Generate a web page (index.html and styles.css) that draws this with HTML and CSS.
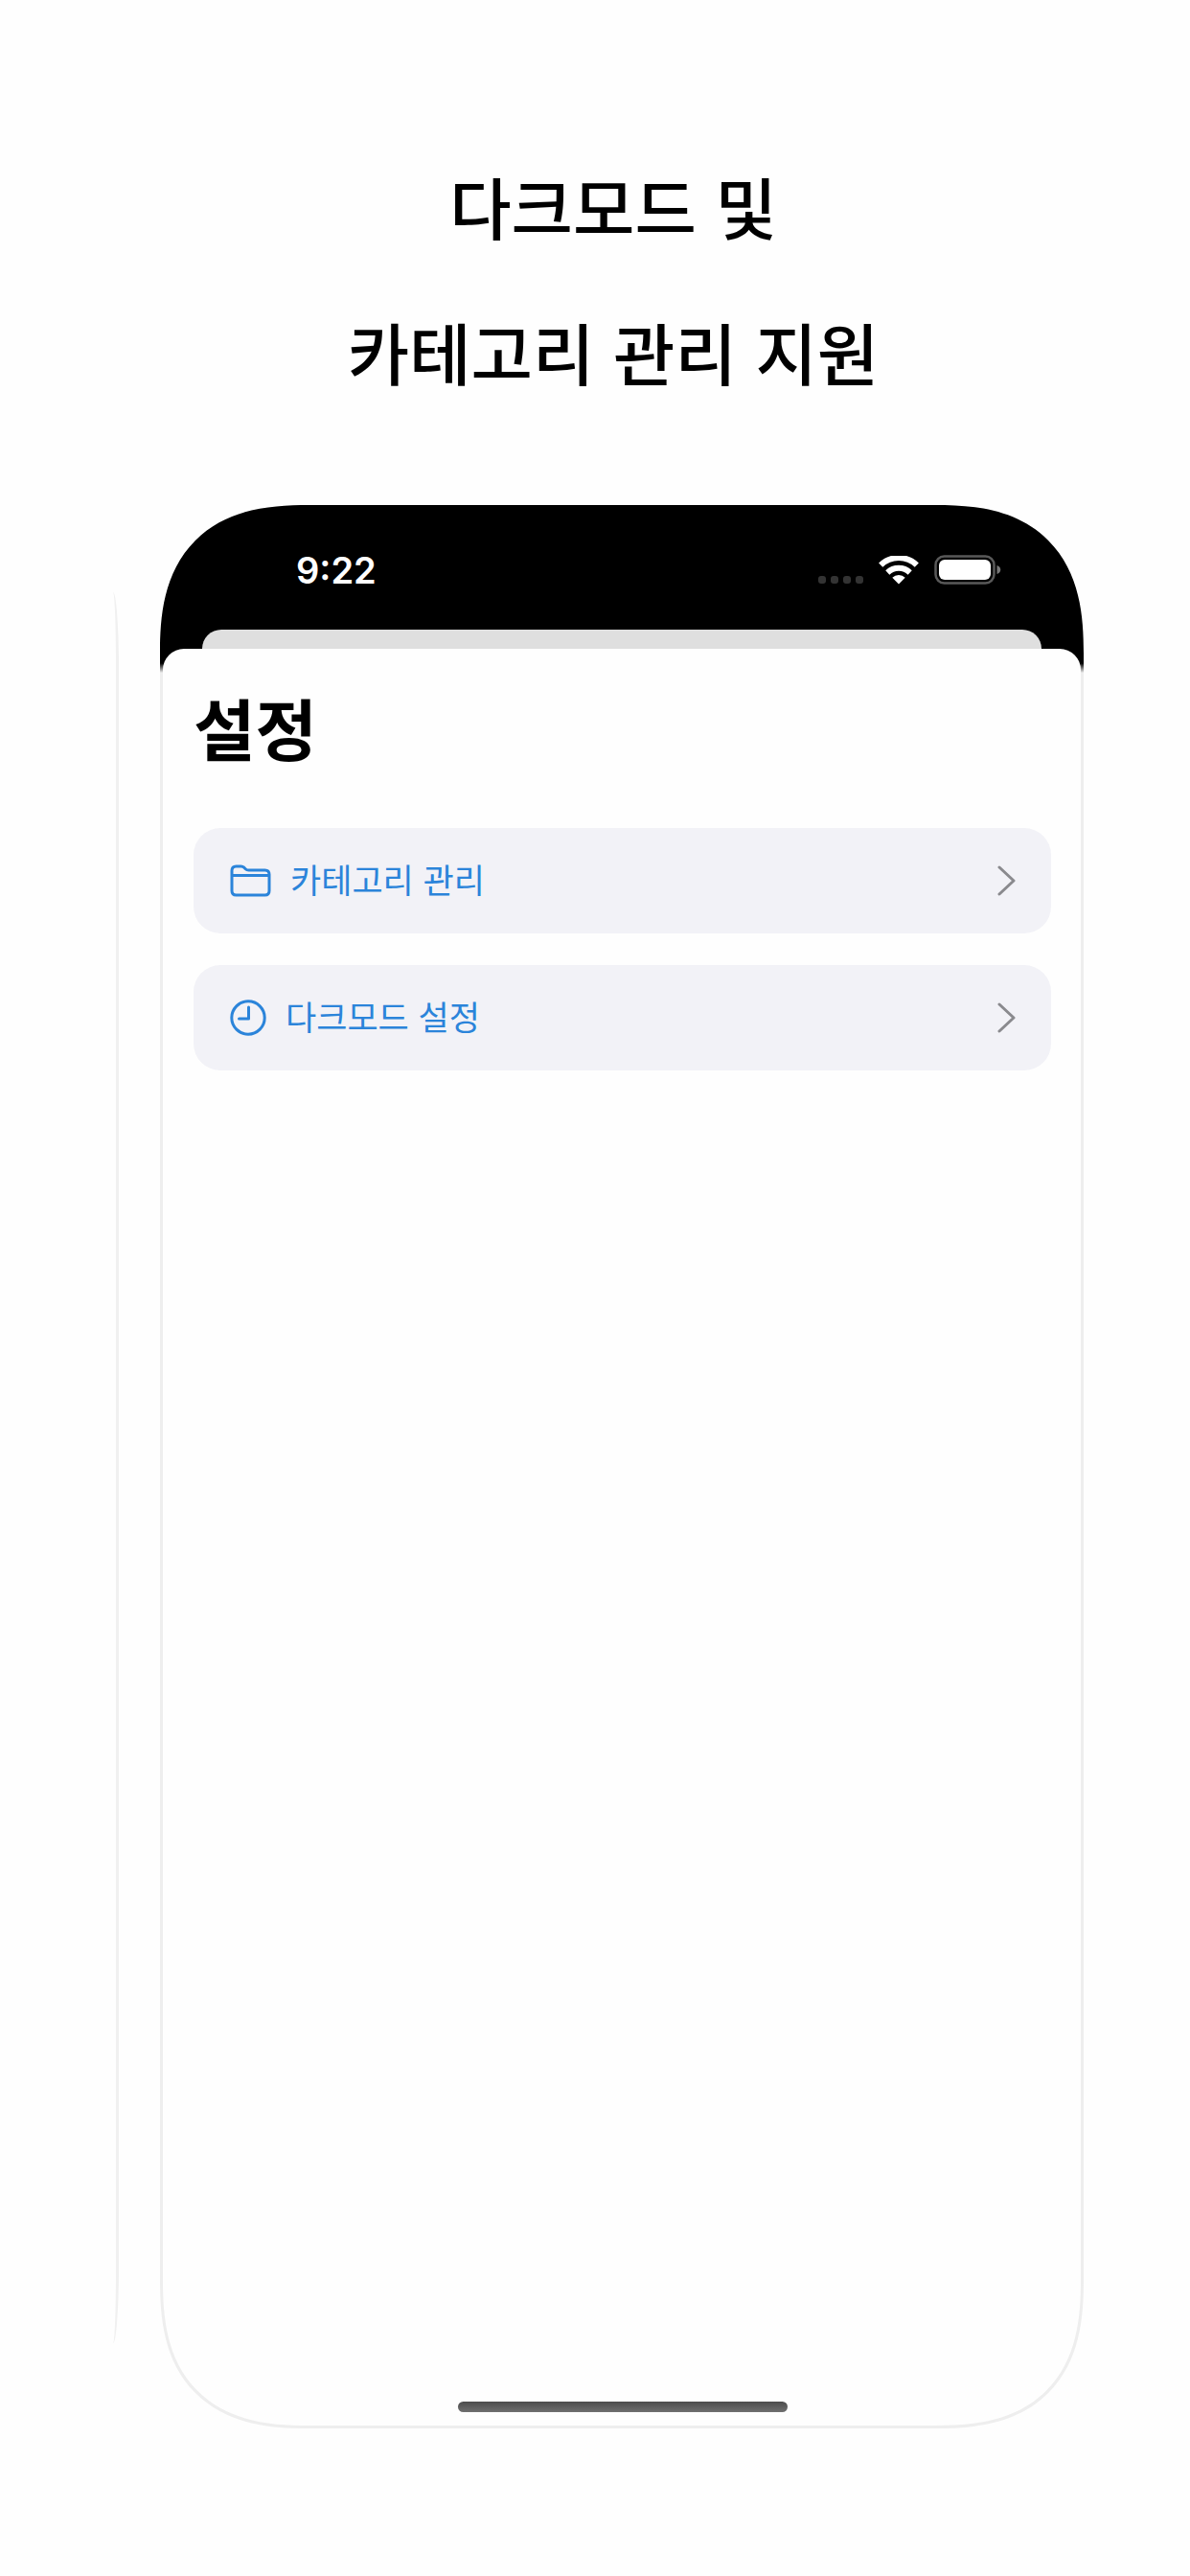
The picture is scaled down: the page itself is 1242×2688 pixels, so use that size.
FILE: index.html
```html
<!DOCTYPE html>
<html lang="ko">
<head>
<meta charset="utf-8">
<meta name="viewport" content="width=device-width, initial-scale=1">
<title>설정</title>
<link rel="stylesheet" href="styles.css">
</head>
<body>
<header class="headline">
  <h1>다크모드 및<br>카테고리 관리 지원</h1>
</header>
<main class="stage">
  <div class="neighbor" aria-hidden="true"></div>
  <div class="phone">
    <div class="status">
      <time class="clock">9:22</time>
      <svg class="signal" viewBox="0 0 48 30" aria-hidden="true">
        <g fill="#333">
          <rect x="0" y="21" width="8" height="8" rx="3"/>
          <rect x="13" y="21" width="8" height="8" rx="3"/>
          <rect x="26" y="21" width="8" height="8" rx="3"/>
          <rect x="39" y="21" width="8" height="8" rx="3"/>
        </g>
      </svg>
      <svg class="wifi" viewBox="0 0 42 30" aria-hidden="true">
        <g fill="none" stroke="#fff" stroke-width="6">
          <path d="M2.200 9.600a27 27 0 0 1 37.600 0"/>
          <path d="M9.300 17.500a17 17 0 0 1 23.400 0"/>
        </g>
        <path fill="#fff" d="M21 29.500L14.300 22.800a9.500 9.500 0 0 1 13.400 0z"/>
      </svg>
      <svg class="battery" viewBox="0 0 70 32" aria-hidden="true">
        <rect x="1.500" y="1.500" width="61" height="28" rx="9" fill="none" stroke="#595959" stroke-width="2.500"/>
        <rect x="5" y="5" width="54" height="21" rx="6" fill="#fff"/>
        <path fill="#777" d="M65.500 11c5 1.500 5 7.500 0 9z"/>
      </svg>
    </div>
    <div class="backdrop"></div>
    <section class="sheet">
      <h2>설정</h2>
      <div class="menu">
        <button type="button" class="row">
          <svg class="folder" viewBox="0 0 43 34" aria-hidden="true">
            <path fill="none" stroke="currentColor" stroke-width="3" stroke-linejoin="round" d="M2 11.500V6.500Q2 2 6.500 2H11.500Q13.500 2 15 3.500L16.200 4.700Q17.500 6 19.500 6H36.500Q41 6 41 10.500V27.500Q41 32 36.500 32H6.500Q2 32 2 27.500V11.500H41"/>
          </svg>
          <span class="label">카테고리 관리</span>
          <svg class="chevron" viewBox="0 0 19 32" aria-hidden="true"><path fill="none" stroke="#8a8a8e" stroke-width="3" stroke-linecap="round" stroke-linejoin="round" d="M2 2L17 16L2 30"/></svg>
        </button>
        <button type="button" class="row">
          <svg class="dial" viewBox="0 0 38 38" aria-hidden="true">
            <g fill="none" stroke="currentColor" stroke-width="3" stroke-linecap="round" stroke-linejoin="round">
              <circle cx="19" cy="19" r="17.200"/>
              <path d="M19.500 8V20H9.500"/>
            </g>
          </svg>
          <span class="label">다크모드 설정</span>
          <svg class="chevron" viewBox="0 0 19 32" aria-hidden="true"><path fill="none" stroke="#8a8a8e" stroke-width="3" stroke-linecap="round" stroke-linejoin="round" d="M2 2L17 16L2 30"/></svg>
        </button>
      </div>
      <div class="home-indicator"></div>
    </section>
  </div>
</main>
</body>
</html>
```
FILE: styles.css
```css
* {
  box-sizing: border-box;
}

body {
  margin: 0;
  min-height: 100vh;
  display: flex;
  flex-direction: column;
  padding: 139px 111px 154px 117px;
  background: #fefefe;
  color: #000;
  font-family: "Noto Sans CJK KR", sans-serif;
}

.headline {
  padding-left: 32px;
  margin-bottom: 84px;
}

h1 {
  margin: 0;
  font-size: 70px;
  font-weight: 500;
  line-height: 152px;
  text-align: center;
}

.stage {
  flex: 1;
  display: flex;
  gap: 43px;
}

/* edge of the adjacent screen */
.neighbor {
  flex: none;
  width: 7px;
  margin: 91px 0 89px;
  border-right: 3px solid #f0f0f0;
  border-radius: 0 6px 6px 0 / 0 80px 80px 0;
}

.phone {
  flex: 1;
  display: flex;
  flex-direction: column;
  padding: 0 3px 3px;
  border-radius: 126px;
  background: linear-gradient(#000 165px, #eee 175px);
}

.status {
  display: flex;
  align-items: center;
  height: 130px;
  padding: 6px 83px 0 139px;
}

.clock {
  flex: 1;
  color: #fff;
  font: 600 38px/46px Inter, sans-serif;
}

.signal {
  width: 48px;
  height: 30px;
  margin-right: 15px;
}

.wifi {
  width: 42px;
  height: 30px;
  margin-right: 16px;
}

.battery {
  width: 70px;
  height: 32px;
}

.backdrop {
  height: 20px;
  margin: 0 41px;
  border-radius: 20px 20px 0 0;
  background: #dfdfdf;
}

.sheet {
  flex: 1;
  display: flex;
  flex-direction: column;
  padding: 32px 31px 14px 32px;
  border-radius: 22px 22px 123px 123px;
  background: #fefefe;
}

h2 {
  margin: 0 0 55px;
  font-size: 70px;
  font-weight: 700;
  line-height: 100px;
}

.menu {
  flex: 1;
  display: flex;
  flex-direction: column;
  gap: 33px;
}

.row {
  display: flex;
  align-items: center;
  gap: 20px;
  height: 110px;
  padding: 0 37px 0 38px;
  border: 0;
  border-radius: 28px;
  background: #f2f2f7;
  color: #2b84da;
  font: 400 35px/50px "Noto Sans CJK KR", sans-serif;
  text-align: left;
}

.label {
  flex: 1;
  padding-bottom: 4px;
}

.folder {
  width: 43px;
  height: 34px;
}

.dial {
  width: 38px;
  height: 38px;
}

.chevron {
  width: 19px;
  height: 32px;
}

.home-indicator {
  align-self: center;
  width: 344px;
  height: 11px;
  border-radius: 6px;
  background: linear-gradient(#4c4c4c, #707070);
}

@supports (corner-shape: squircle) {
  .phone {
    border-radius: 155px;
    corner-shape: superellipse(1.35);
  }

  .sheet {
    border-radius: 22px 22px 152px 152px;
    corner-shape: round round superellipse(1.35) superellipse(1.35);
  }
}
```
